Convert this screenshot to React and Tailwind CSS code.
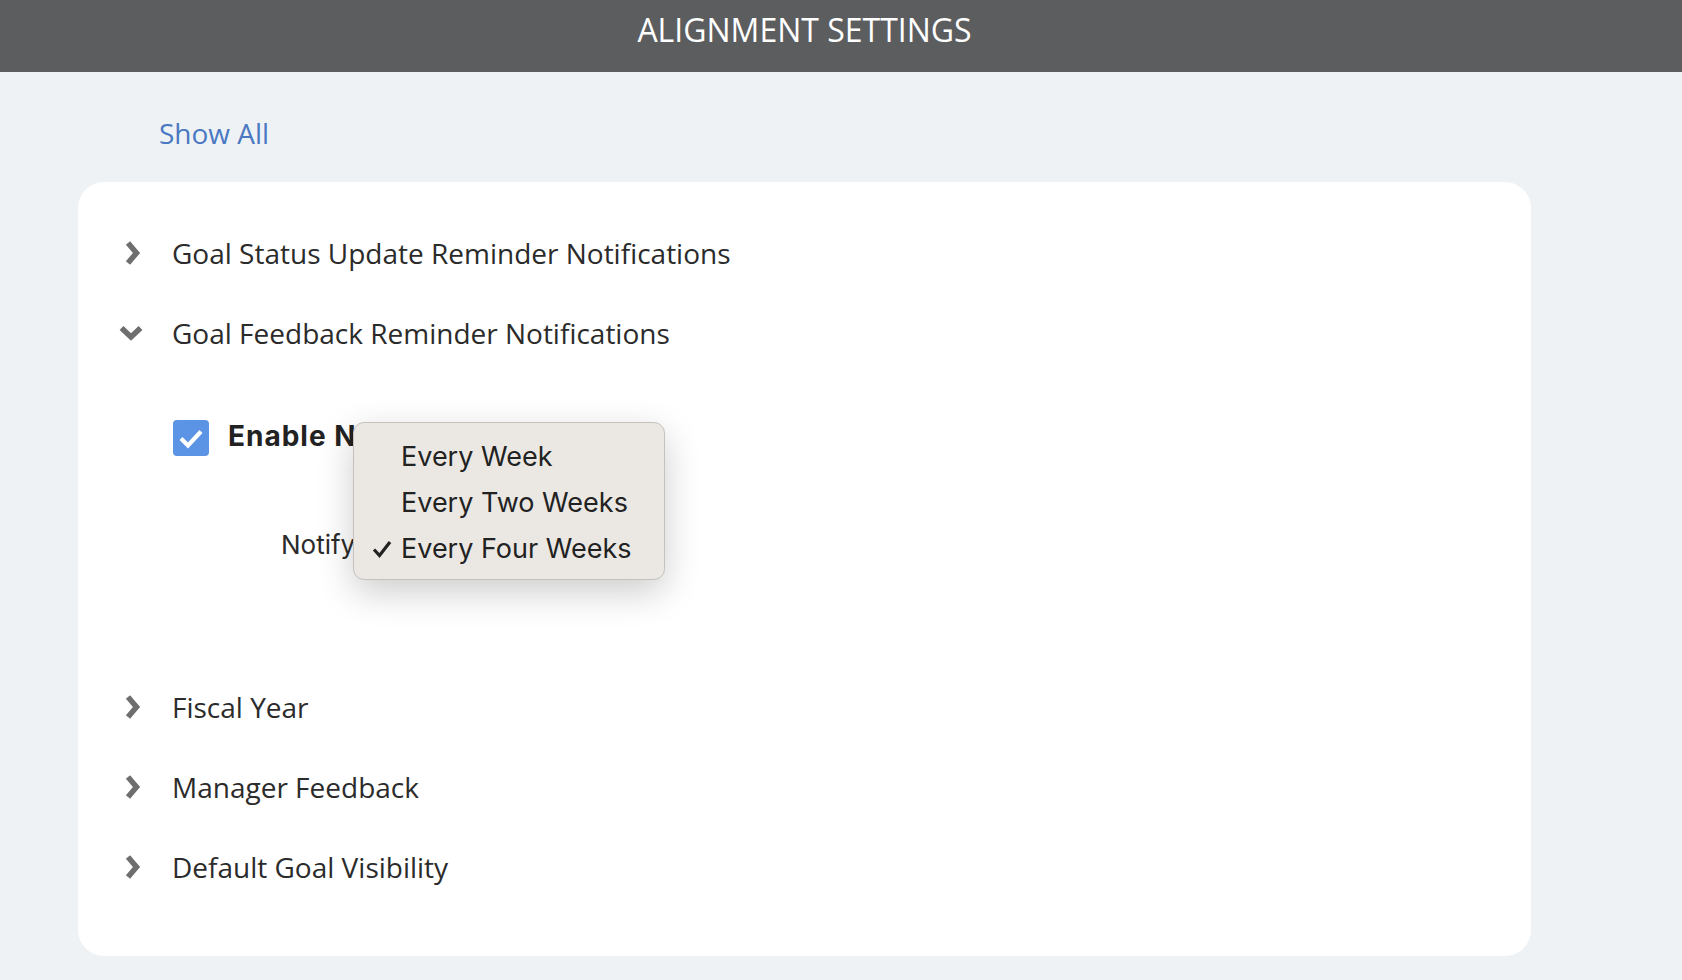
import React from 'react';

const Chevron = ({ open }) => (
    <svg width="24" height="24" viewBox="0 0 24 24" className="shrink-0">
        {open ? (
            <polyline points="2.5,7 12,16 21.5,7" fill="none" stroke="#6e6e6e" strokeWidth="5.5" strokeLinejoin="miter" strokeLinecap="butt" />
        ) : (
            <polyline points="3,2 11.5,12 3,22" fill="none" stroke="#6e6e6e" strokeWidth="5.5" strokeLinejoin="miter" strokeLinecap="butt" />
        )}
    </svg>
);

const SectionRow = ({ label, open }) => (
    <div className="flex items-center h-[80px]">
        <div className={`w-[47px] flex ${open ? '-ml-[6px]' : ''}`}>
            <Chevron open={open} />
        </div>
        <span className={`text-[28px] text-[#2b2b2b] ${open ? 'ml-[6px]' : ''}`}>{label}</span>
    </div>
);

const App = () => {
    const options = ['Every Week', 'Every Two Weeks', 'Every Four Weeks'];

    return (
        <div className="min-h-screen bg-[#eef2f5] font-['Open_Sans',sans-serif]">
            <div className="h-[72px] bg-[#5c5d5f]">
                <div className="ml-[78px] w-[1453px] pt-[8px] text-center text-[32px] leading-[44px] text-white">
                    ALIGNMENT SETTINGS
                </div>
            </div>

            <div className="ml-[78px] w-[1453px]">
                <div className="pl-[81px] h-[110px] flex items-center">
                    <span className="text-[28px] text-[#4a78c2] mt-[12px]">Show All</span>
                </div>

                <div className="relative bg-white rounded-[26px] pl-[47px] pt-[31px] pb-[49px]">
                    <SectionRow label="Goal Status Update Reminder Notifications" />
                    <SectionRow label="Goal Feedback Reminder Notifications" open />

                    <div className="h-[294px] font-['Inter',sans-serif]">
                        <div className="flex items-center gap-[19px] pl-[48px] pt-[45px]">
                            <div className="w-[36px] h-[36px] rounded-[4px] bg-[#5b93e5] flex items-center justify-center">
                                <svg width="28" height="28" viewBox="0 0 28 28">
                                    <polyline points="4,14.5 11,21.5 24,7.5" fill="none" stroke="white" strokeWidth="4.2" />
                                </svg>
                            </div>
                            <span className="text-[28px] font-bold tracking-[1px] text-[#222] -mt-[3px]">Enable Notifications</span>
                        </div>
                        <div className="flex items-center pl-[156px] mt-[51px]">
                            <span className="text-[26px] text-[#2b2b2b]">Notify</span>
                            <div className="ml-[18px] w-[242px] h-[56px] rounded-[6px] bg-[#d6d7db] mt-[16px]" />
                        </div>
                    </div>

                    <SectionRow label="Fiscal Year" />
                    <SectionRow label="Manager Feedback" />
                    <SectionRow label="Default Goal Visibility" />

                    <div className="absolute left-[275px] top-[240px] w-[312px] h-[158px] rounded-[11px] bg-[#ebe8e4] border border-[#c5c2be] shadow-[0_12px_36px_rgba(0,0,0,0.2)] pt-[11px] font-['Inter',sans-serif]">
                        {options.map((opt, i) => (
                            <div key={opt} className="flex items-center h-[46px]">
                                <div className="w-[47px] flex justify-end pr-[9px]">
                                    {i === 2 && (
                                        <svg width="20" height="20" viewBox="0 0 20 20">
                                            <polyline points="2,10.5 7.5,16.5 18,3" fill="none" stroke="#222" strokeWidth="3.2" />
                                        </svg>
                                    )}
                                </div>
                                <span className="text-[27px] text-[#222]">{opt}</span>
                            </div>
                        ))}
                    </div>
                </div>
            </div>
        </div>
    );
};

export default App;
